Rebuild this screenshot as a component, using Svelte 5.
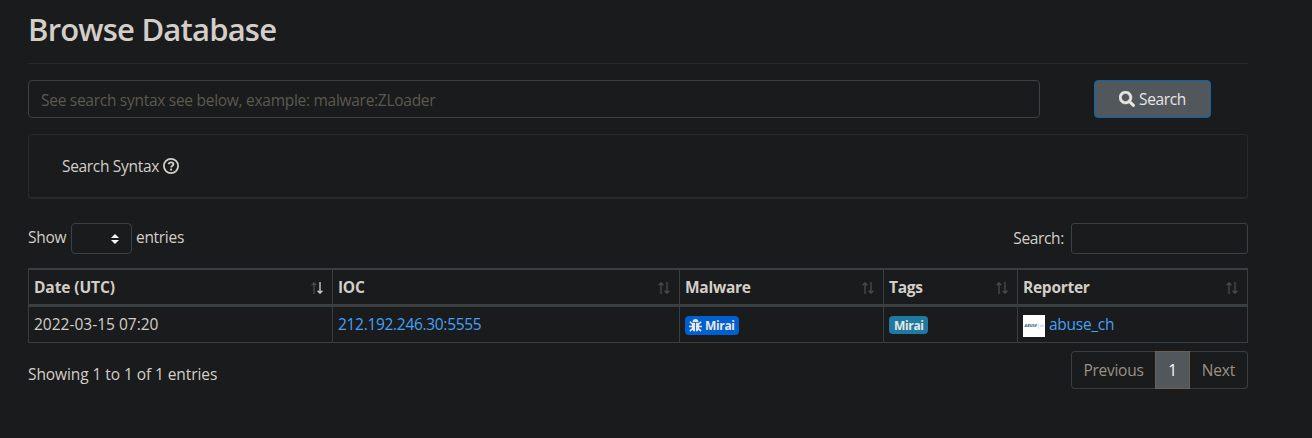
<script>
  const columns = ['Date (UTC)', 'IOC', 'Malware', 'Tags', 'Reporter'];
  let query = $state('');
  let filter = $state('');
</script>

<main>
  <h1><span>Browse Database</span></h1>
  <hr />
  <form class="search-row" onsubmit={(e) => e.preventDefault()}>
    <input class="query" bind:value={query} placeholder="See search syntax see below, example: malware:ZLoader" />
    <button class="go" type="submit">
      <svg width="16" height="16" viewBox="0 0 512 512" fill="currentColor"><path d="M505 442.700 405.300 343c-4.500-4.500-10.600-7-17-7H372c27.600-35.300 44-79.700 44-128C416 93.100 322.900 0 208 0S0 93.100 0 208s93.100 208 208 208c48.300 0 92.700-16.400 128-44v16.300c0 6.400 2.500 12.500 7 17l99.700 99.700c9.400 9.400 24.600 9.400 33.900 0l28.300-28.300c9.400-9.400 9.400-24.600.1-34zM208 336c-70.700 0-128-57.200-128-128 0-70.700 57.200-128 128-128 70.700 0 128 57.200 128 128 0 70.700-57.200 128-128 128z" stroke="currentColor" stroke-width="14" /></svg>
      <span>Search</span>
    </button>
  </form>

  <section class="card">
    <span class="syntax">Search Syntax</span>
    <svg width="16" height="16" viewBox="0 0 16 16" fill="none" stroke="currentColor"><circle cx="8" cy="8" r="7.100" stroke-width="1.800" /><path d="M5.600 6.300C5.900 5 6.800 4.400 8.100 4.400c1.300 0 2.300.8 2.300 1.900 0 1.500-2.200 1.500-2.200 3.100" stroke-width="1.900" /><circle cx="8.100" cy="11.600" r="1.150" fill="currentColor" stroke="none" /></svg>
  </section>

  <div class="controls">
    <div class="length">
      <span class="show">Show</span>
      <button class="select" aria-label="Entries per page">
        <svg width="8" height="10" viewBox="0 0 8 10" fill="#fff"><path d="M4 0 8 4H0zM4 10 0 6h8z" /></svg>
      </button>
      <span class="entries">entries</span>
    </div>
    <label class="filter"><span>Search:</span><input bind:value={filter} /></label>
  </div>

  <div class="table" role="table">
    <div class="row head" role="row">
      {#each columns as name, i}
        <div class="cell" role="columnheader">
          <span class:wide={i === 0}>{name}</span>
          <svg width="12" height="12" viewBox="0 0 12 12" fill="none" stroke-width="1.300">
            <path d="M3 12V1M.6 3.300 3 .9l2.400 2.400" stroke="#4b4c4a" />
            <path d="M9 0v11M6.600 8.700 9 11.100l2.400-2.400" stroke={i === 0 ? '#d8d4cd' : '#4b4c4a'} />
          </svg>
        </div>
      {/each}
    </div>
    <div class="row body" role="row">
      <div class="cell" role="cell"><span class="date">2022-03-15 07:20</span></div>
      <div class="cell" role="cell"><span class="link ioc">212.192.246.30:5555</span></div>
      <div class="cell" role="cell">
        <span class="badge malware">
          <svg width="13" height="13" viewBox="0 0 12 12" fill="currentColor"><path d="M3.300 2.800a2.700 2.700 0 0 1 5.400 0z" /><path d="M2.700 3.400h2.900v8.200C3.700 11.300 2.700 10 2.700 8.300zM6.400 3.400h2.900v4.900c0 1.700-1 3-2.900 3.300z" /><path d="M.8 2.500 3.200 4.800M11.200 2.500 8.800 4.800M0 7h3M12 7H9M.8 11.200 3.300 8.900M11.200 11.200 8.700 8.900" fill="none" stroke="currentColor" stroke-width="1.400" /></svg>
          <span>Mirai</span>
        </span>
      </div>
      <div class="cell" role="cell"><span class="badge tag"><span>Mirai</span></span></div>
      <div class="cell" role="cell">
        <span class="avatar"><span>ABUSE</span><i>|</i><em>ch</em></span>
        <span class="link user">abuse_ch</span>
      </div>
    </div>
  </div>

  <div class="footer">
    <span class="info">Showing 1 to 1 of 1 entries</span>
    <nav>
      <button class="prev"><span>Previous</span></button>
      <button class="current"><span>1</span></button>
      <button class="next"><span>Next</span></button>
    </nav>
  </div>
</main>

<style>
  :global(body) { background: #1a1b1c; }
  main {
    box-sizing: border-box; width: 1312px; height: 438px; padding: 10px 64px 0 28px; overflow: hidden;
    background: #1a1b1c; color: #d3cfc8;
    font: 15.500px/24px "Open Sans", "Noto Sans", sans-serif; letter-spacing: -0.270px;
  }
  main * { box-sizing: border-box; }
  span { white-space: nowrap; }
  svg { display: block; flex: none; }
  input, button { font: inherit; letter-spacing: inherit; color: inherit; background: none; margin: 0; padding: 0; outline: none; }
  h1 { margin: 0; font-size: 31px; font-weight: 600; line-height: 39px; height: 53px; letter-spacing: -0.800px; }
  hr { margin: 0 0 16px; border: 0; height: 1px; background: #28292a; }
  .search-row { display: flex; height: 38px; gap: 54px; }
  .query { width: 1012px; border: 1px solid #3b4042; border-radius: 4px; padding: 2px 12px 0 12px; letter-spacing: -0.280px; }
  .query::placeholder { color: #5c5951; opacity: 1; }
  .go { width: 117px; border: 1px solid #0068b5; border-radius: 4px; background: #52575b; color: #e8e6e3; display: flex; align-items: center; justify-content: center; gap: 4px; letter-spacing: -0.350px; }
  .card { margin-top: 16px; height: 65px; border: 1px solid #28292a; border-bottom-width: 2px; border-radius: 4px; display: flex; align-items: center; padding-left: 33px; gap: 4px; }
  .card svg { margin-bottom: 1px; }
  .syntax { letter-spacing: -0.320px; }
  .controls { margin-top: 24px; height: 31px; display: flex; justify-content: space-between; }
  .length, .filter { display: flex; align-items: center; }
  .length > span { padding-bottom: 3px; }
  .show { width: 43px; letter-spacing: -0.250px; }
  .select { width: 61px; height: 31px; border: 1px solid #3b4042; border-radius: 4px; display: flex; align-items: center; justify-content: flex-end; padding-right: 12px; margin-right: 4px; }
  .entries { letter-spacing: -0.300px; }
  .filter span { margin-right: 7px; letter-spacing: -0.350px; padding-bottom: 1px; }
  .filter input { width: 177px; height: 31px; border: 1px solid #3b4042; border-radius: 3px; padding: 0 8px; }
  .table { margin-top: 14px; width: 1220px; border: 1px solid #393e40; border-top: 2px solid #393e40; }
  .row { display: grid; grid-template-columns: 304px 347px 204px 134px 229px; }
  .cell { display: flex; align-items: center; padding-left: 5px; border-right: 1px solid #393e40; }
  .cell:last-child { border-right: 0; }
  .head { height: 37px; border-bottom: 3px solid #393e40; font-weight: 700; }
  .head .cell { justify-content: space-between; padding-right: 9px; }
  .head .cell svg { margin-top: 1px; }
  .wide { letter-spacing: -0.100px; }
  .body { height: 35px; }
  .date { letter-spacing: 0; }
  .date, .link { padding-bottom: 1px; }
  .link { color: #45a1f5; }
  .ioc { letter-spacing: -0.310px; }
  .badge { display: flex; align-items: center; height: 18px; border-radius: 4px; padding: 1px 5px 0; font-size: 12px; font-weight: 700; line-height: 18px; color: #e8e6e3; margin-top: 1px; letter-spacing: -0.350px; }
  .malware { background: #0060cf; width: 54px; height: 19px; padding-left: 4px; gap: 3px; }
  .tag { background: #1f7aa2; width: 39px; }
  .avatar { width: 22px; height: 22px; margin: 2px 4px 0 0; background: #fff; color: #24566a; display: flex; align-items: center; justify-content: center; font: italic 700 4px/22px "Open Sans", sans-serif; letter-spacing: 0.100px; }
  .avatar i { font: 5px/22px "Open Sans", sans-serif; color: #6da2af; }
  .avatar em { font: 3px/20px "Open Sans", sans-serif; color: #5e929e; }
  .footer { margin-top: 8px; height: 38px; display: flex; justify-content: space-between; }
  .info { padding-top: 11px; letter-spacing: -0.080px; }
  nav { display: flex; width: 177px; height: 38px; }
  nav button { border: 1px solid #393e40; color: #9b9184; }
  .prev { width: 84px; border-right: 0; border-radius: 4px 0 0 4px; }
  .current { width: 35px; background: #52575b; border-color: #6b6254; color: #fff; }
  .next { width: 58px; border-left: 0; border-radius: 0 4px 4px 0; letter-spacing: -0.100px; }
</style>
